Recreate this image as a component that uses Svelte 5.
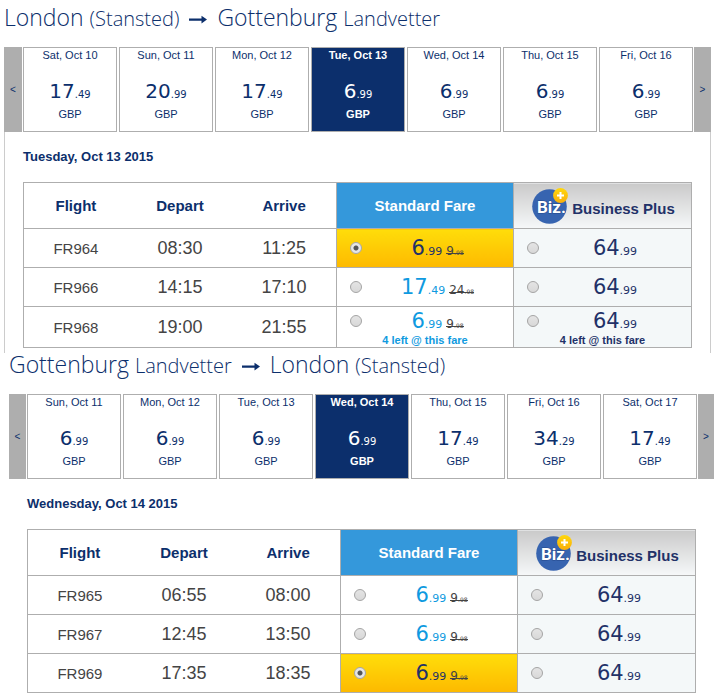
<script lang="ts">
  type Place = { city: string; airport: string };
  type Day = { label: string; price: string };
  type Flight = {
    code: string;
    depart: string;
    arrive: string;
    standard: string;
    was: string;
    plus: string;
    left?: number;
  };
  type Leg = {
    id: string;
    from: Place;
    to: Place;
    title: string;
    days: Day[];
    flights: Flight[];
  };

  const london: Place = { city: "London", airport: "(Stansted)" };
  const gottenburg: Place = { city: "Gottenburg", airport: "Landvetter" };

  const legs: Leg[] = [
    {
      id: "outbound",
      from: london,
      to: gottenburg,
      title: "Tuesday, Oct 13 2015",
      days: [
        { label: "Sat, Oct 10", price: "17.49" },
        { label: "Sun, Oct 11", price: "20.99" },
        { label: "Mon, Oct 12", price: "17.49" },
        { label: "Tue, Oct 13", price: "6.99" },
        { label: "Wed, Oct 14", price: "6.99" },
        { label: "Thu, Oct 15", price: "6.99" },
        { label: "Fri, Oct 16", price: "6.99" },
      ],
      flights: [
        { code: "FR964", depart: "08:30", arrive: "11:25", standard: "6.99", was: "9.98", plus: "64.99" },
        { code: "FR966", depart: "14:15", arrive: "17:10", standard: "17.49", was: "24.98", plus: "64.99" },
        { code: "FR968", depart: "19:00", arrive: "21:55", standard: "6.99", was: "9.98", plus: "64.99", left: 4 },
      ],
    },
    {
      id: "inbound",
      from: gottenburg,
      to: london,
      title: "Wednesday, Oct 14 2015",
      days: [
        { label: "Sun, Oct 11", price: "6.99" },
        { label: "Mon, Oct 12", price: "6.99" },
        { label: "Tue, Oct 13", price: "6.99" },
        { label: "Wed, Oct 14", price: "6.99" },
        { label: "Thu, Oct 15", price: "17.49" },
        { label: "Fri, Oct 16", price: "34.29" },
        { label: "Sat, Oct 17", price: "17.49" },
      ],
      flights: [
        { code: "FR965", depart: "06:55", arrive: "08:00", standard: "6.99", was: "9.98", plus: "64.99" },
        { code: "FR967", depart: "12:45", arrive: "13:50", standard: "6.99", was: "9.98", plus: "64.99" },
        { code: "FR969", depart: "17:35", arrive: "18:35", standard: "6.99", was: "9.98", plus: "64.99" },
      ],
    },
  ];

  let activeDay = $state<Record<string, number>>({ outbound: 3, inbound: 3 });
  let fare = $state<Record<string, string>>({
    outbound: "FR964-standard",
    inbound: "FR969-standard",
  });
</script>

{#snippet place(p: Place)}
  <span>{p.city} <small>{p.airport}</small></span>
{/snippet}

{#snippet amount(price: string)}
  {@const [whole, cents] = price.split(".")}
  {whole}<small>.{cents}</small>
{/snippet}

{#snippet fareCell(leg: Leg, flight: Flight, kind: string, price: string, was?: string)}
  {@const value = `${flight.code}-${kind}`}
  <td class={kind} class:chosen={fare[leg.id] === value}>
    <label class="fare" class:limited={flight.left}>
      <input type="radio" name={leg.id} {value} bind:group={fare[leg.id]} />
      <span class="price">
        <span class="now">{@render amount(price)}</span>
        {#if was}<s>{@render amount(was)}</s>{/if}
      </span>
      {#if flight.left}
        <span class="left">{flight.left} left @ this fare</span>
      {/if}
    </label>
  </td>
{/snippet}

<main>
  {#each legs as leg (leg.id)}
    <section class="leg {leg.id}">
      <h2>
        {@render place(leg.from)}
        <svg class="arrow" viewBox="0 0 18 11" aria-hidden="true">
          <path d="M0 3.500h12.500V.8L18 4.600l-5.500 3.800V5.700H0z" />
        </svg>
        {@render place(leg.to)}
      </h2>

      <div class="carousel">
        <button type="button" class="step" aria-label="Earlier dates">&lt;</button>
        <div class="days">
          {#each leg.days as day, i}
            <button
              type="button"
              class="day"
              class:active={activeDay[leg.id] === i}
              onclick={() => (activeDay[leg.id] = i)}
            >
              <span>{day.label}</span>
              <span class="day-price">{@render amount(day.price)}</span>
              <span>GBP</span>
            </button>
          {/each}
        </div>
        <button type="button" class="step" aria-label="Later dates">&gt;</button>
      </div>

      <div class="results">
        <h3>{leg.title}</h3>
        <table>
          <colgroup>
            <col class="col-info" />
            <col class="col-info" />
            <col class="col-info" />
            <col class="col-standard" />
            <col class="col-plus" />
          </colgroup>
          <thead>
            <tr>
              <th>Flight</th>
              <th>Depart</th>
              <th>Arrive</th>
              <th class="standard">Standard Fare</th>
              <th class="plus">
                <div class="plus-head">
                  <svg class="biz" viewBox="0 0 36 36" aria-hidden="true">
                    <defs>
                      <linearGradient id="coin-{leg.id}" x1="0" y1="0" x2="0" y2="1">
                        <stop offset="0" stop-color="#ffd80c" />
                        <stop offset="1" stop-color="#f9ae0b" />
                      </linearGradient>
                    </defs>
                    <circle cx="17.500" cy="18.500" r="17.300" fill="#3764b0" />
                    <text x="5" y="25">Biz.</text>
                    <circle cx="28.500" cy="7.500" r="7.400" fill="url(#coin-{leg.id})" />
                    <path d="M28.500 4v7M25 7.500h7" stroke="#fff" stroke-width="2" />
                  </svg>
                  <span>Business Plus</span>
                </div>
              </th>
            </tr>
          </thead>
          <tbody>
            {#each leg.flights as flight (flight.code)}
              <tr>
                <td class="code">{flight.code}</td>
                <td class="time">{flight.depart}</td>
                <td class="time">{flight.arrive}</td>
                {@render fareCell(leg, flight, "standard", flight.standard, flight.was)}
                {@render fareCell(leg, flight, "plus", flight.plus)}
              </tr>
            {/each}
          </tbody>
        </table>
      </div>
    </section>
  {/each}
</main>

<style>
  :global(body) {
    background: #fff;
    overflow-x: hidden;
  }

  main {
    --navy: #0c2f6c;
    --line: #aeaeae;
    font-family: "Liberation Sans", Arial, sans-serif;
    color: var(--navy);
  }

  .outbound {
    margin: 0 3px 0 4px;
  }

  .inbound {
    margin-left: 9px;
  }

  h2 {
    display: flex;
    align-items: baseline;
    gap: 10px;
    height: 47px;
    margin: 0;
    font: 300 23px/34px "Open Sans", "Noto Sans", sans-serif;
    white-space: nowrap;
  }

  .inbound h2 {
    height: 41px;
    line-height: 22px;
  }

  h2 small {
    font-size: 20px;
  }

  .arrow {
    width: 18px;
    height: 11px;
    fill: var(--navy);
  }

  button {
    margin: 0;
    padding: 0;
    border: 0;
    font: inherit;
    color: inherit;
    cursor: pointer;
  }

  .carousel {
    display: flex;
    gap: 1px;
    height: 85px;
  }

  .step {
    flex: 0 0 17px;
    background: var(--line);
    font-size: 10px;
  }

  .outbound .step:first-child {
    flex-basis: 18px;
  }

  .inbound .step:last-child {
    flex-basis: 16px;
  }

  .days {
    flex: 1;
    display: flex;
    gap: 2px;
  }

  .day {
    flex: 1;
    display: flex;
    flex-direction: column;
    align-items: center;
    box-sizing: border-box;
    border: 1px solid var(--line);
    background: #fff;
    font-size: 11px;
    line-height: 14px;
  }

  .day-price {
    padding: 17px 0 4px;
    font: 20px/24px "DejaVu Sans", Verdana, sans-serif;
  }

  .day-price small {
    font-size: 10px;
    line-height: 1;
  }

  .active {
    background: var(--navy);
    color: #fff;
    font-weight: bold;
  }

  .results {
    padding: 0 18px;
  }

  .outbound .results {
    border: solid #ccc;
    border-width: 0 1px;
    padding-bottom: 5px;
  }

  h3 {
    margin: 0;
    padding: 17px 0;
    font-size: 13px;
    line-height: 16px;
  }

  table {
    width: 100%;
    table-layout: fixed;
    border-collapse: collapse;
    border: 1px solid var(--line);
  }

  .col-standard {
    width: 177px;
  }

  .col-plus {
    width: 178px;
  }

  th,
  td {
    padding: 0;
    border-bottom: 1px solid var(--line);
    text-align: center;
  }

  th {
    height: 45px;
    font-size: 15px;
  }

  td {
    height: 38px;
  }

  .standard,
  .plus {
    border-left: 1px solid var(--line);
  }

  th.standard {
    background: #3498db;
    color: #fff;
  }

  th.plus {
    background: linear-gradient(#cacaca, #f6f8f9);
    color: #223168;
  }

  td.plus {
    background: #f4f8f9;
    color: #223168;
  }

  .plus-head {
    display: flex;
    align-items: center;
    justify-content: center;
    gap: 4px;
    padding-left: 2px;
    line-height: 18px;
  }

  .plus-head span {
    padding-top: 6px;
  }

  .biz {
    width: 36px;
    height: 36px;
  }

  .biz text {
    font: bold 17px Roboto, "Liberation Sans", sans-serif;
    fill: #fff;
    stroke: #24498c;
    stroke-width: 1px;
    paint-order: stroke;
  }

  .code {
    color: #444;
    font-size: 15px;
  }

  .time {
    color: #444;
    font-size: 18px;
  }

  .fare {
    display: grid;
    grid-template-columns: 25px 1fr;
    align-items: center;
    cursor: pointer;
  }

  .limited {
    padding-top: 2px;
  }

  input {
    appearance: none;
    box-sizing: border-box;
    width: 12px;
    height: 12px;
    margin: 0 0 0 13px;
    border: 1px solid #a5a5a5;
    border-radius: 50%;
    background: linear-gradient(#e4e4e4, #d8d8d8);
  }

  input:checked {
    background: radial-gradient(circle, #555 0 2px, #e6e6e6 3px);
  }

  .price {
    display: flex;
    align-items: baseline;
    justify-content: center;
    gap: 4px;
    height: 24px;
    font: 21px/24px "DejaVu Sans", Verdana, sans-serif;
  }

  .price small {
    font-size: 11px;
    line-height: 1;
  }

  .price s {
    color: #444;
    font-size: 12px;
    line-height: 12px;
    text-decoration: none;
    background: linear-gradient(#444, #444) no-repeat 0 8px / 100% 1px;
  }

  .price s small {
    font-size: 6px;
  }

  td.standard .now,
  td.standard .left {
    color: #0f9ae0;
  }

  td.standard.chosen,
  td.plus.chosen {
    background: linear-gradient(#ffdd0a, #fdb900);
  }

  td.chosen .now {
    color: #223168;
  }

  .left {
    grid-column: 1 / -1;
    font-size: 11px;
    font-weight: bold;
    line-height: 14px;
  }
</style>
